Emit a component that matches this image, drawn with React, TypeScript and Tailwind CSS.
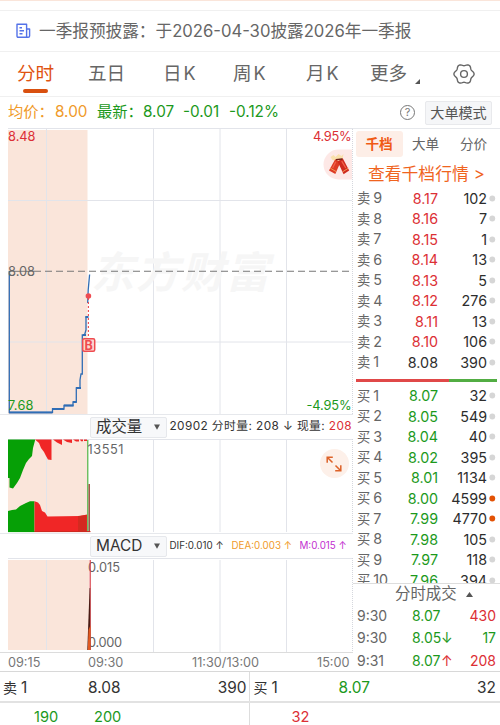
const RED = '#dc2f35'
const GREEN = '#1c991c'

const SELL = [
  ['卖9', '8.17', '102'],
  ['卖8', '8.16', '7'],
  ['卖7', '8.15', '1'],
  ['卖6', '8.14', '13'],
  ['卖5', '8.13', '5'],
  ['卖4', '8.12', '276'],
  ['卖3', '8.11', '13'],
  ['卖2', '8.10', '106'],
  ['卖1', '8.08', '390'],
]

const BUY = [
  ['买1', '8.07', '32'],
  ['买2', '8.05', '549'],
  ['买3', '8.04', '40'],
  ['买4', '8.02', '395'],
  ['买5', '8.01', '1134'],
  ['买6', '8.00', '4599'],
  ['买7', '7.99', '4770'],
  ['买8', '7.98', '105'],
  ['买9', '7.97', '118'],
  ['买10', '7.96', '394'],
]

const TABS = [
  { label: '分时', width: 'w-[71px]', active: true },
  { label: '五日', width: 'w-[75px]' },
  { label: '日K', width: 'w-[70px]' },
  { label: '周K', width: 'w-[73px]' },
  { label: '月K', width: 'w-[64px]' },
  { label: '更多', width: 'w-[45px]' },
]

// six-lobed outline of the settings icon
const GEAR = Array.from({ length: 73 }, (_, i) => {
  const a = (i * 5 * Math.PI) / 180
  const r = 9.2 + 0.9 * Math.cos(6 * a)
  return `${i ? 'L' : 'M'}${(11 + r * Math.cos(a)).toFixed(2)} ${(11 + r * Math.sin(a)).toFixed(2)}`
}).join('') + 'Z'

function Row({ row, color }: { row: string[]; color: string }) {
  const hot = row[2] === '4599' || row[2] === '4770'
  return (
    <div className="flex h-[20.5px] shrink-0 items-center pl-1 text-[14.3px] text-[#2d2d2d]">
      <span className="flex w-[34px] shrink-0 items-baseline gap-[3px] leading-5 text-[#666]">
        <span className="text-[13.3px]">{row[0][0]}</span>
        <span>{row[0].slice(1)}</span>
      </span>
      <span className={`w-[47px] text-right ${color}`}>{row[1]}</span>
      <span className="w-[49px] text-right">{row[2]}</span>
      <svg className="ml-[2px] shrink-0" width="7" height="7" viewBox="0 0 7 7">
        <circle cx="3.3" cy="3.5" r="2.9" fill={hot ? '#e35205' : '#d6d6d6'} />
      </svg>
    </div>
  )
}

function Select({ label }: { label: string }) {
  return (
    <div className="flex h-[21px] w-[77px] shrink-0 items-center justify-between rounded-[2px] border border-[#e6e8ec] bg-[#f7f8fa] pl-[5px] pr-[6px] text-[15.4px] text-[#333]">
      {label}
      <svg width="6" height="6" viewBox="0 0 6 6"><path d="M0 0.5H6L3 5.8Z" fill="#555" /></svg>
    </div>
  )
}

function PriceChart() {
  return (
    <svg className="block" width="353" height="286" viewBox="0 128 353 286" fontSize="12.8">
      <rect x="8" y="130" width="79.5" height="284" fill="#fae5da" />
      <path d="M8 128.5H353M8 200.5H352M8 342H352M46.5 129V414M153.5 129V414M220 129V414M286.5 129V414" stroke="#e2e4ea" fill="none" />
      <path d="M352.5 129V414" stroke="#d5d7dd" strokeDasharray="1 1" />
      <text x="91" y="288" fontSize="43" fontWeight="700" fontStyle="italic" fill="#f6f6f6" textLength="178">东方财富</text>
      <path d="M34 271.3H351" stroke="#777" strokeWidth="1.1" strokeDasharray="7 4" fill="none" />
      <path d="M9 271.3H34" stroke="#777" />
      <path d="M9.3 271V412.3H52.5V409H64V405.5H73V402H76.3V388H80V380L81 374H82.3V335H84.5L86 330V317H88" stroke="#2f6db5" strokeWidth="1.3" fill="none" />
      <path d="M9 412.5H52.5M52 409H64M64 405.5H73.5M73 402H76.5M76 388H81M83 335H86M85.5 317H88.5" stroke="#2f6db5" strokeWidth="1.8" />
      <path d="M87.7 303L88.2 290L89.6 274.5" stroke="#2f6db5" strokeWidth="1.3" fill="none" />
      <path d="M88.4 298V338" stroke="#ef4b50" strokeWidth="1.1" strokeDasharray="2 2" />
      <circle cx="88.4" cy="296" r="2.8" fill="#ef4b50" />
      <rect x="82.7" y="338.7" width="12" height="12.6" rx="1.5" fill="#fbd9cf" stroke="#ef4b50" strokeWidth="1.5" />
      <text x="88.7" y="349.6" fontSize="12.5" fontWeight="700" fill="#ef4b50" textAnchor="middle">B</text>
      <text x="8" y="141" fill={RED} textLength="27.5">8.48</text>
      <text x="8" y="275.5" fill="#666" textLength="27">8.08</text>
      <text x="8" y="409.5" fill={GREEN} textLength="25.5">7.68</text>
      <text x="351.5" y="141" fill={RED} textAnchor="end" textLength="38.5">4.95%</text>
      <text x="351.5" y="409.5" fill={GREEN} textAnchor="end" textLength="45">-4.95%</text>
      <path d="M352 149.5H338.5A15 15 0 0 0 338.5 179.5H352Z" fill="#fde8e6" />
      <path d="M330.5 157l3-2 2 2 3-3 3 2 2-2-1 5-4 2-6-1z" fill="#f9e0ac" />
      <path d="M335.2 159.3L340.6 162L335.3 174L329 170.6Z" fill="#dd3a25" />
      <path d="M337.6 161.5L342.7 158.2L349.2 170.5L343.6 174.2Z" fill="#cf2a1e" />
      <path d="M330.3 168.2L336.2 171.6M342.6 171.8L348.2 168.3" stroke="#f39a55" strokeWidth="1" />
      <path d="M335.8 161.8L332.6 168M341.7 161.2L345.8 168" stroke="#f1624a" strokeWidth="1.3" />
      <path d="M336 159.7L342.3 159" stroke="#6e1f17" strokeWidth="1.3" />
    </svg>
  )
}

function VolumeChart() {
  return (
    <svg className="block" width="353" height="94" viewBox="0 439 353 94" fontSize="12.8">
      <rect x="8" y="439.5" width="79.5" height="92.3" fill="#fae5da" />
      <path d="M8 439.5H352M46.5 440V532M153.5 440V532M220 440V532M286.5 440V532" stroke="#e2e4ea" />
      <path d="M352.5 439V533" stroke="#d5d7dd" strokeDasharray="1 1" />
      <path d="M8 439.5V478H9.5V487.5L13 488.5L17 483L20 478L23 470L26 463L29 459L32 456L33 448L35 440.5V439.5Z" fill="#06a006" />
      <path d="M35 439.5L39 443L41 448L44 452L46 456L48 459.5L51.5 460V439.5ZM53 439.5L57 442.5L62 445V439.5ZM63 439.5L67 442L72 443V439.5ZM73 439.5L76 441.5H79V439.5ZM80 439.5L81 441.3H83V439.5ZM84 439.5V441H87V439.5Z" fill="#f02626" />
      <path d="M8 532V511L12 510L16 509.5L20 506L26 503L30 501.3H34.5V532Z" fill="#06a006" />
      <path d="M34.5 532V501.3L38 502.5L40 505L42 511L45 512.5L47.5 516.5L80 516L87 514.5V532Z" fill="#f02626" />
      <path d="M78 516V532H86.5V515Z" fill="#d42a20" />
      <path d="M87.8 440V532" stroke="#3fae35" strokeWidth="1.1" />
      <path d="M89.2 484V532" stroke="#8c2d1c" strokeWidth="1.2" />
      <path d="M8 531.6H34.5" stroke="#06a006" /><path d="M34.5 531.6H90.5" stroke="#c92a20" />
      <text x="87.5" y="453.5" fill="#666" textLength="36">13551</text>
    </svg>
  )
}

function MacdChart() {
  return (
    <svg className="block" width="353" height="94" viewBox="0 558 353 94" fontSize="12.8">
      <rect x="8" y="560" width="81" height="90" fill="#fae5da" />
      <path d="M8 558.5H352M46.5 560V650M153.5 560V652M220 560V652M286.5 560V652" stroke="#e2e4ea" />
      <path d="M352.5 558V652" stroke="#d5d7dd" strokeDasharray="1 1" />
      <text x="88" y="572" fill="#666" textLength="32">0.015</text>
      <text x="88" y="646.5" fill="#666" textLength="34">0.000</text>
      <path d="M90.2 560V650" stroke="#d9404a" strokeWidth="1.2" />
      <path d="M89.6 588L87.3 650H90.2V588Z" fill="#4a1b14" />
      <path d="M88.5 630L87.8 650H90.5V625Z" fill="#e25a20" />
    </svg>
  )
}

export default function App() {
  return (
    <div className="flex h-[725px] w-[500px] flex-col overflow-hidden whitespace-nowrap bg-white font-[Inter,'Noto_Sans_CJK_SC',sans-serif] text-[#666]">
      <div className="h-[10px] shrink-0 border-t border-[#fae5da]" />

      {/* 公告 */}
      <div className="flex h-[41px] shrink-0 items-center border-t border-[#f0f0f0] pl-4 text-[16.65px]">
        <svg className="mr-2" width="15" height="16" viewBox="0 0 15 16" fill="none" stroke="#5472e8" strokeWidth="1.4" strokeLinejoin="round">
          <path d="M1 1.2H10.6V14.3H2.2Q1 14.3 1 13.1ZM10.6 6H13.6V13Q13.6 14.3 12.2 14.3H9M3.5 4.7H6M3.5 7.7H8M3.5 10.8H6.5" />
        </svg>
        一季报预披露：于2026-04-30披露2026年一季报
      </div>

      {/* 周期切换 */}
      <nav className="flex h-[45px] shrink-0 items-center border-t border-[#f0f0f0] pl-[17px] text-[18.6px]">
        {TABS.map(t => (
          <div key={t.label} className={`relative flex shrink-0 ${t.width} ${t.active ? 'text-[#df5311]' : ''}`}>
            {t.label[0]}
            <span className={t.label[1] === 'K' ? 'ml-[2px] text-[18px]' : ''}>{t.label[1]}</span>
            {t.active && <span className="absolute -bottom-[5.5px] left-[6px] h-1 w-[25px] rounded-full bg-[#d9500f]" />}
          </div>
        ))}
        <svg className="mt-[15px]" width="5" height="5" viewBox="0 0 5 5"><path d="M5 0V5H0Z" fill="#555" /></svg>
        <svg className="ml-[33px]" width="22" height="22" viewBox="0 0 22 22" fill="none" stroke="#666" strokeWidth="1.4">
          <path d={GEAR} />
          <circle cx="11" cy="11" r="3.4" />
        </svg>
      </nav>

      {/* 均价 / 最新 */}
      <div className="flex h-8 shrink-0 items-center border-t border-[#f0f0f0] pl-2 text-[15.3px] text-[#1c991c]">
        <span className="w-[47px] text-[#f09a2a]">均价：</span>
        <span className="w-[42px] text-[#f09a2a]">8.00</span>
        <span className="w-[46px]">最新：</span>
        <span className="w-10">8.07</span>
        <span className="w-[46px]">-0.01</span>
        <span className="w-[171px]">-0.12%</span>
        <span className="flex size-[15px] items-center justify-center rounded-full border border-[#777] text-[11px] text-[#777]">?</span>
        <span className="ml-[10px] flex h-6 w-[67px] items-center justify-center rounded-[2px] border border-[#e8e9ec] bg-[#f5f6f8] text-[14.1px] text-[#555]">大单模式</span>
      </div>

      <main className="flex h-[543px] shrink-0">
        <section className="w-[353px] shrink-0">
          <PriceChart />
          <div className="flex h-[25px] items-center border-t border-[#e6e8ec] pl-[90px] text-[11.8px] text-[#333]">
            <Select label="成交量" />
            <span className="ml-[2.5px] tracking-[0.41px]">20902 分时量: 208 ↓ 现量: <span className="text-[#dc2f35]">208</span></span>
          </div>
          <div className="relative">
            <VolumeChart />
            <div className="absolute right-[4.5px] top-[10px] flex size-[29px] items-center justify-center rounded-full bg-[#fdf0e9]">
              <svg width="16" height="16" viewBox="0 0 16 16" fill="none" stroke="#dd6229" strokeWidth="1.5">
                <path d="M1.2 6.8V1.2H6.8M1.5 1.5L6.5 6.5M14.8 9.2V14.8H9.2M14.5 14.5L9.5 9.5" />
              </svg>
            </div>
          </div>
          <div className="flex h-[25px] items-center border-t border-[#e6e8ec] pl-[90px] text-[9.8px]">
            <Select label="MACD" />
            <span className="ml-[2.5px] w-[62px] text-[#333]">DIF:0.010 ↑</span>
            <span className="w-[68px] text-[#f09a2a]">DEA:0.003 ↑</span>
            <span className="text-[#c22fd0]">M:0.015 ↑</span>
          </div>
          <MacdChart />
          <div className="flex h-[19px] items-center border-t border-[#dcdcdc] pl-2 pt-px text-[12.7px] text-[#777]">
            <span className="w-[80px]">09:15</span>
            <span className="w-[104px]">09:30</span>
            <span className="w-[125px]">11:30/13:00</span>
            <span>15:00</span>
          </div>
        </section>

        {/* 盘口 */}
        <aside className="flex min-w-0 flex-1 flex-col border-t border-[#e6e8ec]">
          <div className="mt-[2px] flex h-[26px] shrink-0 items-center pl-[2.5px] text-[13.6px]">
            <span className="flex h-full w-[47px] items-center justify-center rounded-[3px] bg-[#fdeee7] font-bold text-[#f05a14]">千档</span>
            <span className="ml-[9.5px] w-12">大单</span>
            <span>分价</span>
          </div>
          <div className="flex h-[31px] shrink-0 items-center gap-[5px] pl-[15px] pt-[5px] text-[16.8px] text-[#f0641e]">
            查看千档行情 <span>&gt;</span>
          </div>
          {SELL.map(r => <Row key={r[0]} row={r} color={r[1] === '8.08' ? 'text-[#2d2d2d]' : 'text-[#dc2f35]'} />)}
          <div className="mx-[3px] mb-[4px] mt-[6px] flex h-[3px] shrink-0">
            <div className="w-[93px] bg-[#e04848]" />
            <div className="flex-1 bg-[#52ad43]" />
          </div>
          <div className="flex h-[197.5px] shrink-0 flex-col overflow-hidden">
            {BUY.map(r => <Row key={r[0]} row={r} color="text-[#1c991c]" />)}
          </div>
          <div className="flex h-[21px] shrink-0 items-center gap-[9px] border-t border-[#ddd] pl-[42px] text-[15.4px]">
            分时成交
            <svg width="7" height="5" viewBox="0 0 7 5"><path d="M0 5H7L3.5 0Z" fill="#555" /></svg>
          </div>
          {[['9:30', '8.07', '', '430'], ['9:30', '8.05', '↓', '17'], ['9:31', '8.07', '↑', '208']].map((t, i) => (
            <div key={i} className="flex h-[22.5px] shrink-0 items-center pl-1 text-[14px]">
              <span className="w-[55px]">{t[0]}</span>
              <span className="flex w-[44px] text-[#1c991c]">
                <span className="w-[29px]">{t[1]}</span>
                <span className={t[2] === '↑' ? 'text-[#dc2f35]' : ''}>{t[2]}</span>
              </span>
              <span className={`w-10 text-right ${t[2] === '↓' ? 'text-[#1c991c]' : 'text-[#dc2f35]'}`}>{t[3]}</span>
            </div>
          ))}
        </aside>
      </main>

      {/* 买一卖一 */}
      <div className="flex h-[30px] shrink-0 border-t border-[#d8d8d8] text-[15.4px] text-[#333]">
        <div className="flex w-[249.5px] items-center border-r border-[#ddd] pl-[3px] pt-[3px]">
          <span className="flex w-[85px] items-baseline gap-1"><span className="text-[14px]">卖</span>1</span>
          <span>8.08</span>
          <span className="ml-auto pr-[2px]">390</span>
        </div>
        <div className="flex flex-1 items-center pl-[4px] pr-1 pt-[3px]">
          <span className="flex w-[85px] items-baseline gap-1"><span className="text-[14px]">买</span>1</span>
          <span className="text-[#1c991c]">8.07</span>
          <span className="ml-auto">32</span>
        </div>
      </div>
      <div className="flex h-6 shrink-0 border-t-2 border-[#e2e2e2] text-[14.6px] leading-[18px] text-[#1c991c]">
        <div className="flex w-[249.5px] shrink-0 border-r border-[#ddd] pl-[34px] pt-[5px]">
          <span className="w-[60px]">190</span>
          <span>200</span>
        </div>
        <span className="pl-[42px] pt-[5px] text-[#dc2f35]">32</span>
      </div>
    </div>
  )
}
